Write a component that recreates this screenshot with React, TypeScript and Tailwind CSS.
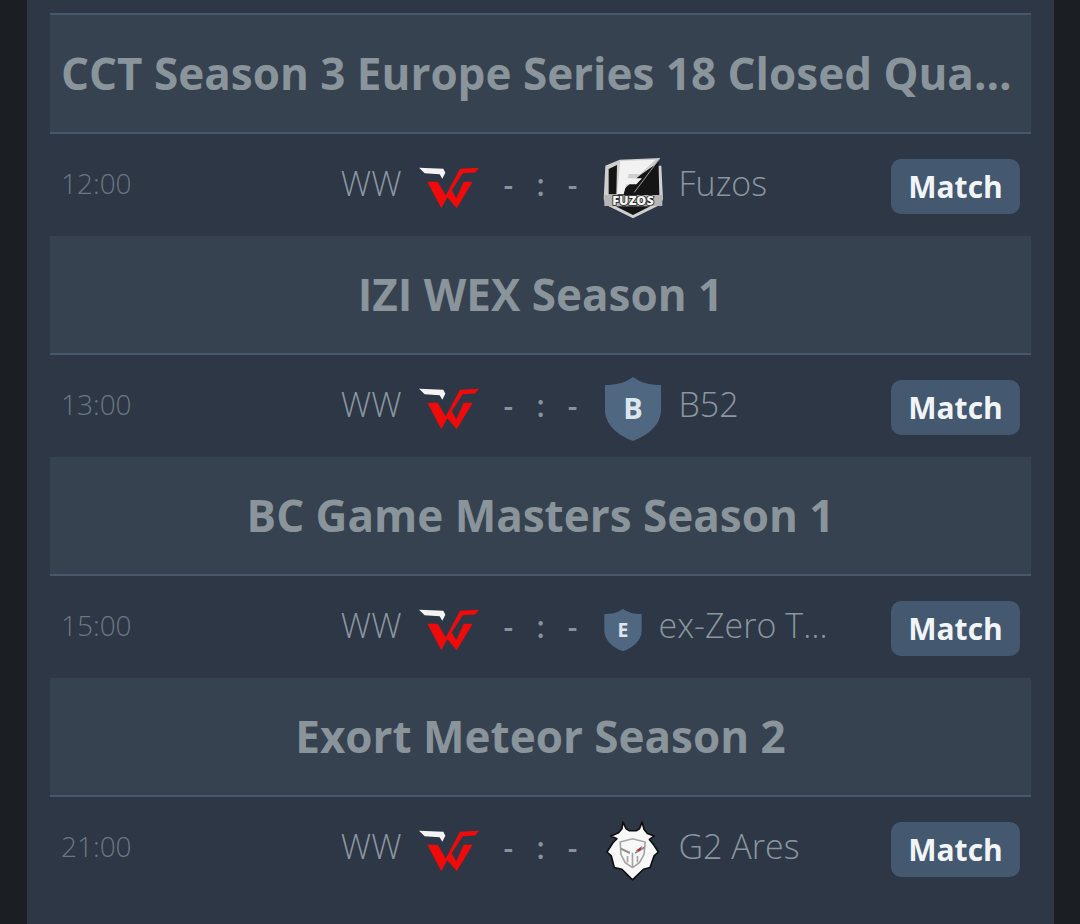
const matches = [
  { title: "CCT Season 3 Europe Series 18 Closed Qualifier", time: "12:00", team: "Fuzos", logo: "fuzos" },
  { title: "IZI WEX Season 1", time: "13:00", team: "B52", logo: "b" },
  { title: "BC Game Masters Season 1", time: "15:00", team: "ex-Zero Tolerance", logo: "e" },
  { title: "Exort Meteor Season 2", time: "21:00", team: "G2 Ares", logo: "g2" },
];

const WwLogo = () => (
  <svg viewBox="55 53 180 125" className="mt-[5px] h-[42px] w-[60px] shrink-0">
    <path d="M55 55 L128 58 L134 70 L125 88 L117 74 L72 71 Z" fill="#f4f4f4" />
    <path
      d="M80 97 L111 97 L135 138 L178 58 L235 55 L224 69 L186 71 L153 123 L167 146 L189 97 L216 97 L168 176 L140 143 L122 176 Z"
      fill="#f00a0a"
    />
  </svg>
);

const Shield = ({ letter, big }: { letter: string; big: boolean }) => (
  <svg viewBox="0 0 60 66" className={big ? "mt-[5px] h-[66px] w-[60px] shrink-0" : "mt-[5px] h-[44px] w-[40px] shrink-0"}>
    <path d="M30 1 C38 7 47 9 58 9 L58 34 C58 48 46 59 30 65 C14 59 2 48 2 34 L2 9 C13 9 22 7 30 1 Z" fill="#4f6780" />
    <text
      x="30"
      y="43"
      textAnchor="middle"
      fontSize="29"
      fontWeight="700"
      fill="#dde6ef"
      fontFamily="'Open Sans', sans-serif"
    >
      {letter}
    </text>
  </svg>
);

const FuzosLogo = () => (
  <svg viewBox="38 24 180 186" className="mt-[5px] h-[62px] w-[60px] shrink-0">
    <path d="M45 50 L88 32 L210 27 L192 50 L213 50 L218 150 L210 167 L128 208 L46 167 L40 150 Z" fill="#cfcfcf" />
    <path d="M55 60 L80 48 L78 136 L55 136 Z M150 78 L205 40 L205 60 L207 138 L80 138 Z" fill="#151515" />
    <path d="M76 172 L180 172 L128 198 Z" fill="#151515" />
    <path d="M90 36 L195 32 L150 75 L115 75 L112 88 L155 88 L138 106 L108 106 L100 136 L80 136 Z" fill="#f2f2f2" />
    <path d="M207 30 L132 130" stroke="#9a9a9a" strokeWidth="3" />
    <rect x="42" y="138" width="174" height="33" fill="#b5b5b5" />
    <text
      x="128"
      y="168"
      textAnchor="middle"
      fontSize="38"
      fontWeight="800"
      fill="#f5f5f5"
      stroke="#1a1a1a"
      strokeWidth="5"
      paintOrder="stroke"
      fontFamily="'Open Sans', sans-serif"
    >
      FUZOS
    </text>
  </svg>
);

const G2Logo = () => (
  <svg viewBox="44 22 166 186" className="mt-[5px] h-[62px] w-[55px] shrink-0 mx-[2.5px]">
    <path
      d="M98 28 L108 48 L118 54 L138 54 L148 48 L156 28 L162 50 L172 62 L192 70 L178 80 L190 95 L205 118 L192 130 L180 165 L160 170 L127 202 L95 170 L72 165 L63 130 L50 118 L68 90 L80 78 L62 70 L85 60 L95 48 Z"
      fill="#f8f8f8"
      stroke="#0e0e0e"
      strokeWidth="5"
      strokeLinejoin="round"
    />
    <path d="M90 88 L127 78 L165 88 L162 125 L148 150 L127 165 L105 150 L92 125 Z" fill="#f8f8f8" stroke="#a5a5a5" strokeWidth="5" />
    <path d="M92 108 L119 121 M163 104 L135 121" stroke="#8c8c8c" strokeWidth="6" />
    <path d="M127 120 L127 165 M112 130 L112 150 M142 130 L142 150" stroke="#a5a5a5" strokeWidth="5" />
    <path d="M137 114 L156 100 L150 114 Z" fill="#c8242c" />
  </svg>
);

const TeamLogo = ({ logo }: { logo: string }) => {
  if (logo === "fuzos") return <FuzosLogo />;
  if (logo === "g2") return <G2Logo />;
  if (logo === "b") return <Shield letter="B" big />;
  return <Shield letter="E" big={false} />;
};

export default function App() {
  return (
    <div
      className="h-[924px] overflow-hidden bg-[#1b1f24] pl-[27px] pr-[26px] text-[#87929b]"
      style={{ fontFamily: "'Open Sans', sans-serif" }}
    >
      <div className="h-full bg-[#2d3745] px-[23px] pt-[13px]">
        {matches.map((m, i) => (
          <div key={m.time}>
            <div
              className={`flex items-center justify-center bg-[#374250] border-b-2 border-[#46586a] px-[11px] ${
                i === 0 ? "h-[121px] border-t-2" : "h-[119px]"
              }`}
            >
              <h2 className="mb-[2px] truncate text-[44px] font-bold text-[#8a949b]">{m.title}</h2>
            </div>
            <div className="grid h-[102px] grid-cols-[1fr_74px_1fr] items-center">
              <div className="flex items-center justify-between pl-[11px] pr-[25px]">
                <span className="mb-[4px] text-[28px] font-light text-[#6b7783]">{m.time}</span>
                <div className="flex items-center gap-[17px]">
                  <span className="mb-[4px] text-[34px] font-light text-[#8a96a0]">WW</span>
                  <WwLogo />
                </div>
              </div>
              <div className="mb-[2px] flex justify-between text-[30px] font-semibold text-[#87929b]">
                <span>-</span>
                <span>:</span>
                <span>-</span>
              </div>
              <div className="flex items-center justify-between pl-[25px] pr-[11px]">
                <div className="flex items-center gap-[16px]">
                  <TeamLogo logo={m.logo} />
                  <span className="mb-[4px] max-w-[170px] truncate text-[34px] font-light text-[#8a96a0]">{m.team}</span>
                </div>
                <button className="mt-[2px] h-[55px] w-[129px] rounded-[10px] bg-[#44586f] text-[30px] font-bold text-[#f2f5f8]">
                  Match
                </button>
              </div>
            </div>
          </div>
        ))}
      </div>
    </div>
  );
}
